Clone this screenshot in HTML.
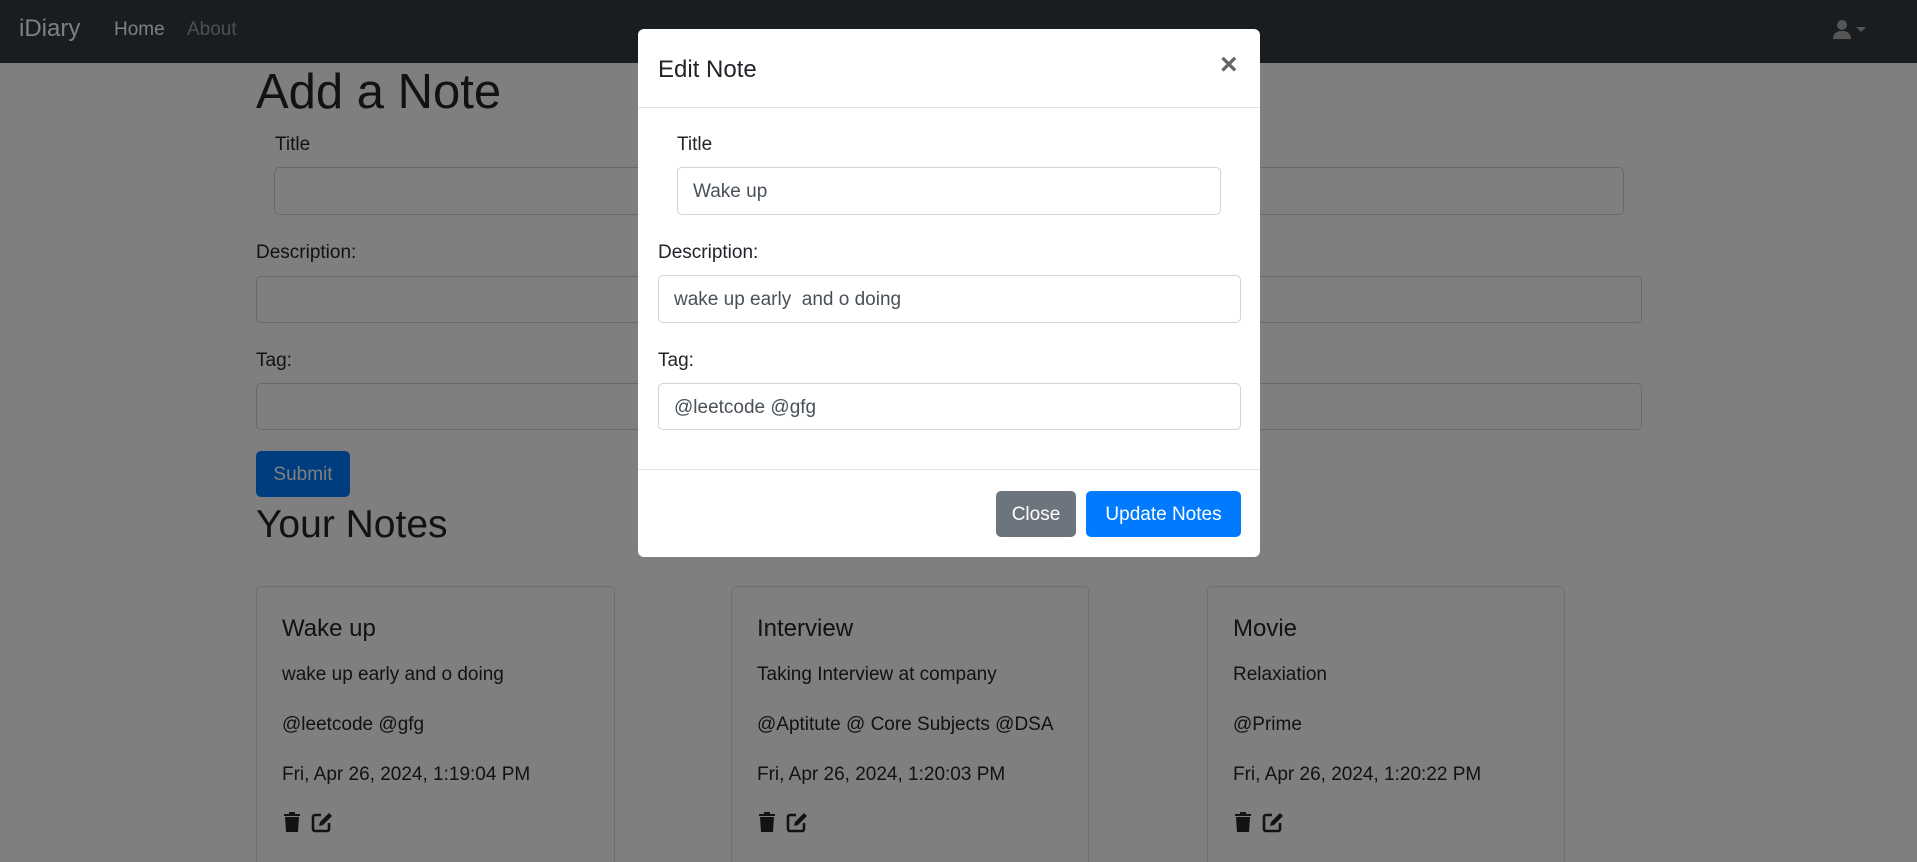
<!DOCTYPE html>
<html style="width:1917px;height:862px;overflow:hidden"><head><meta charset="utf-8"><style>
*{box-sizing:border-box;margin:0;padding:0}
body{width:1917px;height:862px;overflow:hidden;background:#fff;font-family:"Liberation Sans",sans-serif;color:#212529;position:relative;font-size:19px}
.a{position:absolute}
.nav{left:0;top:0;width:1917px;height:63px;background:#343a40}
.inp{position:absolute;border:1px solid #ced4da;border-radius:5px;background:#fff;height:48px;padding-left:15px;line-height:48px;color:#495057;font-size:19px}
.card{position:absolute;top:586px;width:359px;height:276px;border:1px solid rgba(0,0,0,.125);border-bottom:none;border-radius:5px 5px 0 0;background:#fff}
.card h5{position:absolute;left:25px;top:28px;font-size:24px;font-weight:500}
.card p{position:absolute;left:25px;font-size:19px}
.ov{left:0;top:0;width:1917px;height:862px;background:rgba(0,0,0,.5)}
.modal{left:638px;top:29px;width:622px;height:528px;background:#fff;border-radius:6px}
</style></head><body>
<div class="a nav"></div>
<div class="a" style="left:19px;top:15px;font-size:24px;color:#fff">iDiary</div>
<div class="a" style="left:114px;top:19px;font-size:19px;color:#fff">Home</div>
<div class="a" style="left:187px;top:19px;font-size:19px;color:rgba(255,255,255,.5)">About</div>
<svg class="a" style="left:1832px;top:18px" width="40" height="24" viewBox="0 0 40 24"><circle cx="10" cy="7" r="5" fill="#aaa"/><path d="M1 21c0-6 4-8 9-8s9 2 9 8z" fill="#aaa"/><path d="M24 9h10l-5 5z" fill="#aaa"/></svg>
<div class="a" style="left:256px;top:64px;font-size:49px;font-weight:500">Add a Note</div>
<div class="a" style="left:275px;top:134px">Title</div>
<div class="inp" style="left:274px;top:167px;width:1350px"></div>
<div class="a" style="left:256px;top:242px">Description:</div>
<div class="inp" style="left:256px;top:276px;width:1386px;height:47px"></div>
<div class="a" style="left:256px;top:350px">Tag:</div>
<div class="inp" style="left:256px;top:383px;width:1386px;height:47px"></div>
<div class="a" style="left:256px;top:451px;width:94px;height:46px;background:#007bff;border-radius:5px;color:#fff;text-align:center;line-height:48px">Submit</div>
<div class="a" style="left:256px;top:503px;font-size:39px;font-weight:500">Your Notes</div>
<div class="card" style="left:256px"><h5>Wake up</h5><p style="top:77px">wake up early and o doing</p><p style="top:127px">@leetcode @gfg</p><p style="top:177px">Fri, Apr 26, 2024, 1:19:04 PM</p>
<svg class="a" style="left:26px;top:224px" width="56" height="22" viewBox="0 0 56 22"><path d="M1 3h16v2H1zM6 1h6v2H6zM2 6h14l-1 15H3z" fill="#212529"/><path d="M38 4h-6a2 2 0 0 0-2 2v12a2 2 0 0 0 2 2h12a2 2 0 0 0 2-2v-6" stroke="#212529" stroke-width="2.6" fill="none"/><path d="M36 15l1-4 9-9 3 3-9 9z" fill="#212529"/></svg></div>
<div class="card" style="left:731px;width:358px"><h5>Interview</h5><p style="top:77px">Taking Interview at company</p><p style="top:127px">@Aptitute @ Core Subjects @DSA</p><p style="top:177px">Fri, Apr 26, 2024, 1:20:03 PM</p>
<svg class="a" style="left:26px;top:224px" width="56" height="22" viewBox="0 0 56 22"><path d="M1 3h16v2H1zM6 1h6v2H6zM2 6h14l-1 15H3z" fill="#212529"/><path d="M38 4h-6a2 2 0 0 0-2 2v12a2 2 0 0 0 2 2h12a2 2 0 0 0 2-2v-6" stroke="#212529" stroke-width="2.6" fill="none"/><path d="M36 15l1-4 9-9 3 3-9 9z" fill="#212529"/></svg></div>
<div class="card" style="left:1207px;width:358px"><h5>Movie</h5><p style="top:77px">Relaxiation</p><p style="top:127px">@Prime</p><p style="top:177px">Fri, Apr 26, 2024, 1:20:22 PM</p>
<svg class="a" style="left:26px;top:224px" width="56" height="22" viewBox="0 0 56 22"><path d="M1 3h16v2H1zM6 1h6v2H6zM2 6h14l-1 15H3z" fill="#212529"/><path d="M38 4h-6a2 2 0 0 0-2 2v12a2 2 0 0 0 2 2h12a2 2 0 0 0 2-2v-6" stroke="#212529" stroke-width="2.6" fill="none"/><path d="M36 15l1-4 9-9 3 3-9 9z" fill="#212529"/></svg></div>
<div class="a ov"></div>
<div class="a modal">
<div class="a" style="left:20px;top:27px;font-size:24px;font-weight:500">Edit Note</div>
<div class="a" style="left:582px;top:19px;font-size:30px;color:#666;font-weight:bold">×</div>
<div class="a" style="left:0;top:78px;width:622px;height:1px;background:#dee2e6"></div>
<div class="a" style="left:39px;top:105px">Title</div>
<div class="inp" style="left:39px;top:138px;width:544px">Wake up</div>
<div class="a" style="left:20px;top:213px">Description:</div>
<div class="inp" style="left:20px;top:246px;width:583px;height:48px">wake up early&nbsp; and o doing</div>
<div class="a" style="left:20px;top:321px">Tag:</div>
<div class="inp" style="left:20px;top:354px;width:583px;height:47px">@leetcode @gfg</div>
<div class="a" style="left:0;top:440px;width:622px;height:1px;background:#dee2e6"></div>
<div class="a" style="left:358px;top:462px;width:80px;height:46px;background:#6c757d;border-radius:5px;color:#fff;text-align:center;line-height:48px">Close</div>
<div class="a" style="left:448px;top:462px;width:155px;height:46px;background:#007bff;border-radius:5px;color:#fff;text-align:center;line-height:48px">Update Notes</div>
</div>
</body></html>
